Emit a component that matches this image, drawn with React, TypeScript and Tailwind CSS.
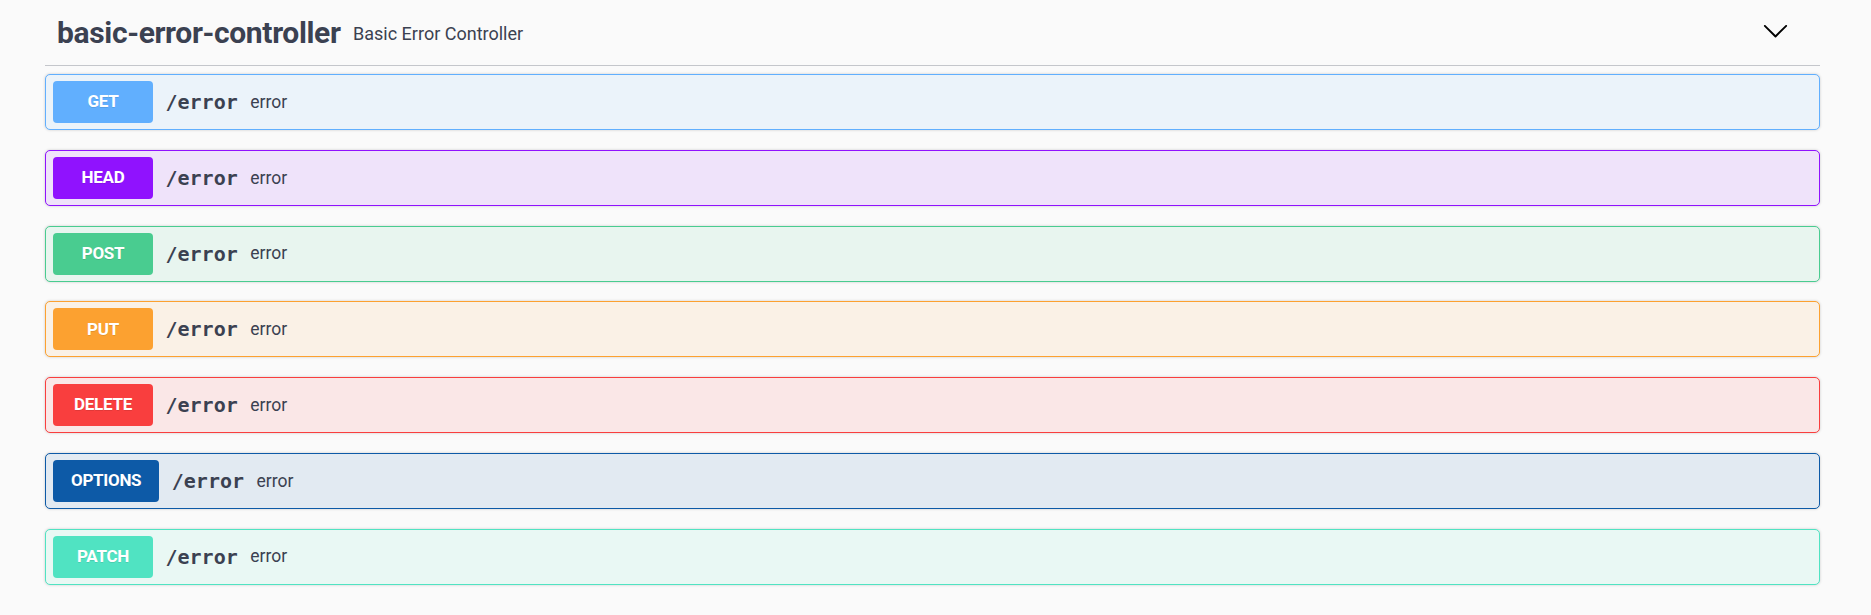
const ops = [
  { method: 'GET', border: 'border-[#61affe]', bg: 'bg-[#ebf3fa]', badge: 'bg-[#61affe]' },
  { method: 'HEAD', border: 'border-[#9012fe]', bg: 'bg-[#efe3fa]', badge: 'bg-[#9012fe]' },
  { method: 'POST', border: 'border-[#49cc90]', bg: 'bg-[#e8f5ef]', badge: 'bg-[#49cc90]' },
  { method: 'PUT', border: 'border-[#fca130]', bg: 'bg-[#faf1e6]', badge: 'bg-[#fca130]' },
  { method: 'DELETE', border: 'border-[#f93e3e]', bg: 'bg-[#fae7e7]', badge: 'bg-[#f93e3e]' },
  { method: 'OPTIONS', border: 'border-[#0d5aa7]', bg: 'bg-[#e2eaf2]', badge: 'bg-[#0d5aa7]' },
  { method: 'PATCH', border: 'border-[#50e3c2]', bg: 'bg-[#e9f8f4]', badge: 'bg-[#50e3c2]' },
]

function Chevron() {
  return (
    <svg width="27" height="27" viewBox="0 0 20 20" className="-mt-[5px] mr-[31px]">
      <path
        fill="#000"
        d="M17.418 6.109c.272-.268.709-.268.979 0s.271.701 0 .969l-7.908 7.83c-.27.268-.707.268-.979 0l-7.908-7.83c-.27-.268-.27-.701 0-.969.271-.268.709-.268.979 0L10 13.25l7.418-7.141z"
      />
    </svg>
  )
}

function OpBlock({ op }: { op: (typeof ops)[number] }) {
  return (
    <div
      className={`flex items-center h-[56px] px-[7px] rounded-[5px] border ${op.border} ${op.bg} shadow-[0_0_3px_rgba(0,0,0,0.19)]`}
    >
      <span
        className={`flex items-center justify-center h-[42px] min-w-[100px] px-[18px] rounded-[4px] ${op.badge} text-white text-[17px] font-bold tracking-[-0.3px] text-shadow-[0_1px_0_rgba(0,0,0,0.1)]`}
      >
        {op.method}
      </span>
      <span className="px-[12.5px] text-[20px] font-bold text-[#3b4151] font-['DejaVu_Sans_Mono',monospace]">
        /error
      </span>
      <span className="text-[17.5px] text-[#3b4151]">error</span>
    </div>
  )
}

export default function App() {
  return (
    <div className="min-h-[615px] w-full bg-[#fafafa] font-['Roboto',sans-serif]">
      <div className="ml-[45px] w-[1775px]">
        <div className="flex items-center h-[66px] pl-[12px] border-b border-[#c4c6cb]">
          <span className="text-[30px] font-bold tracking-[-0.35px] text-[#3b4151]">basic-error-controller</span>
          <span className="ml-[12.5px] mt-[1px] text-[18px] text-[#3b4151]">Basic Error Controller</span>
          <div className="ml-auto flex items-center">
            <Chevron />
          </div>
        </div>
        <div className="mt-[8px] flex flex-col gap-[19.75px]">
          {ops.map((op) => (
            <OpBlock key={op.method} op={op} />
          ))}
        </div>
      </div>
    </div>
  )
}
